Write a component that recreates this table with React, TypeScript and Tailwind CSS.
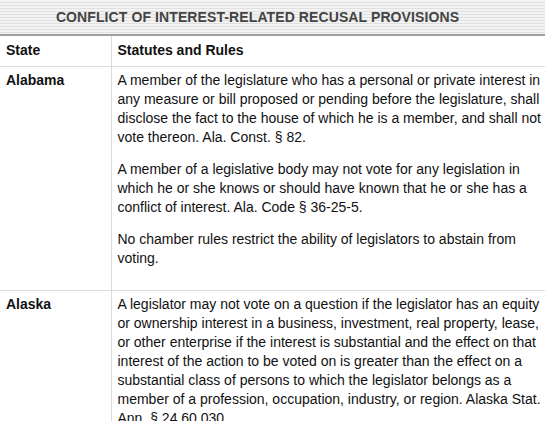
export default function App() {
  return (
    <div className="w-[545px] h-[421px] overflow-hidden bg-white font-['Liberation_Sans',Arial,sans-serif] text-[14px] text-[#111]">
      {/* Title bar */}
      <div className="h-[36px] flex items-center justify-center pr-[30px] border-b-2 border-[#a0a0a0] bg-[repeating-linear-gradient(180deg,#f3f3f3_0px,#f3f3f3_2px,#e0e0e0_2px,#e0e0e0_3px)]">
        <h2 className="text-[14px] font-bold text-[#444] tracking-[0.1px]">
          CONFLICT OF INTEREST-RELATED RECUSAL PROVISIONS
        </h2>
      </div>

      <table className="w-full border-collapse">
        <thead>
          <tr className="border-b border-[#dcdcdc]">
            <th className="w-[111px] h-[30px] px-[6px] text-left font-bold border-r border-[#dcdcdc]">State</th>
            <th className="px-[6px] text-left font-bold">Statutes and Rules</th>
          </tr>
        </thead>
        <tbody>
          <tr className="border-b border-[#dcdcdc]">
            <td className="align-top px-[6px] pt-[4px] pb-[9px] leading-[19px] font-bold border-r border-[#dcdcdc]">Alabama</td>
            <td className="align-top pl-[6px] pr-[2px] pt-[4px] pb-[9px] leading-[19px]">
              <p className="mb-[13px]">
                A member of the legislature who has a personal or private interest in any measure or bill proposed or pending before the legislature, shall disclose the fact to the house of which he is a member, and shall not vote thereon. Ala. Const. § 82.
              </p>
              <p className="mb-[13px]">
                A member of a legislative body may not vote for any legislation in which he or she knows or should have known that he or she has a conflict of interest. Ala. Code § 36-25-5.
              </p>
              <p className="mb-[13px]">
                No chamber rules restrict the ability of legislators to abstain from voting.
              </p>
            </td>
          </tr>
          <tr className="border-b border-[#dcdcdc]">
            <td className="align-top px-[6px] pt-[4px] pb-[9px] leading-[19px] font-bold border-r border-[#dcdcdc]">Alaska</td>
            <td className="align-top pl-[6px] pr-[2px] pt-[4px] pb-[9px] leading-[19px]">
              <p className="mb-[13px]">
                A legislator may not vote on a question if the legislator has an equity or ownership interest in a business, investment, real property, lease, or other enterprise if the interest is substantial and the effect on that interest of the action to be voted on is greater than the effect on a substantial class of persons to which the legislator belongs as a member of a profession, occupation, industry, or region. Alaska Stat. Ann. § 24.60.030.
              </p>
            </td>
          </tr>
        </tbody>
      </table>
    </div>
  );
}
